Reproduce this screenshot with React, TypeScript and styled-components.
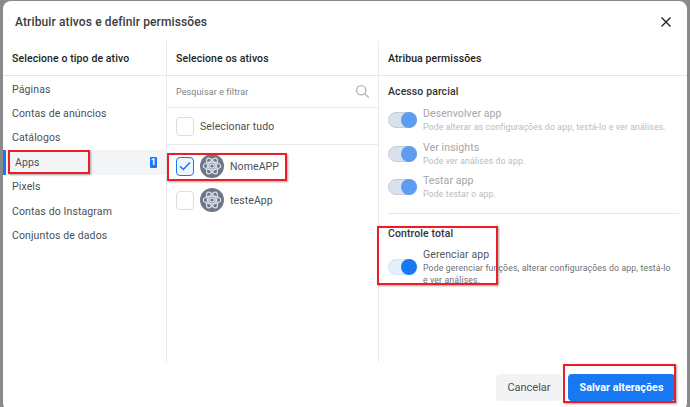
import React from 'react';
import styled, { createGlobalStyle } from 'styled-components';

const GlobalStyle = createGlobalStyle`
  html, body {
    margin: 0;
    padding: 0;
    background: #8a8a8a;
  }
  * {
    box-sizing: border-box;
  }
`;

const assetTypes = ['Páginas', 'Contas de anúncios', 'Catálogos', 'Apps', 'Pixels', 'Contas do Instagram', 'Conjuntos de dados'];

const partialPermissions = [
  { title: 'Desenvolver app', text: 'Pode alterar as configurações do app, testá-lo e ver análises.' },
  { title: 'Ver insights', text: 'Pode ver análises do app.' },
  { title: 'Testar app', text: 'Pode testar o app.' },
];

const AtomIcon = () => (
  <svg width="24" height="24" viewBox="0 0 24 24" fill="none" stroke="#dfe2ea" strokeWidth="1.2">
    <ellipse cx="12" cy="12" rx="8.8" ry="3.8" />
    <ellipse cx="12" cy="12" rx="8.8" ry="3.8" transform="rotate(60 12 12)" />
    <ellipse cx="12" cy="12" rx="8.8" ry="3.8" transform="rotate(120 12 12)" />
    <circle cx="12" cy="12" r="2.2" />
  </svg>
);

const App = () => (
  <Page>
    <GlobalStyle />
    <Modal>
      <Header>
        <Title>Atribuir ativos e definir permissões</Title>
        <CloseButton>
          <svg width="12" height="12" viewBox="0 0 12 12" stroke="#1c1e21" strokeWidth="1.3">
            <path d="M1.5 1.5 L10.5 10.5 M10.5 1.5 L1.5 10.5" />
          </svg>
        </CloseButton>
      </Header>
      <Columns>
        <TypeColumn>
          <ColumnHead>Selecione o tipo de ativo</ColumnHead>
          <TypeList>
            {assetTypes.map((name) => (
              <TypeRow key={name} $active={name === 'Apps'}>
                {name}
                {name === 'Apps' && <Badge>1</Badge>}
              </TypeRow>
            ))}
          </TypeList>
        </TypeColumn>
        <AssetColumn>
          <ColumnHead>Selecione os ativos</ColumnHead>
          <SearchRow>
            Pesquisar e filtrar
            <svg width="15" height="15" viewBox="0 0 15 15" fill="none" stroke="#b4b7bd" strokeWidth="1.4">
              <circle cx="6.2" cy="6.2" r="4.6" />
              <path d="M9.6 9.6 L13.8 13.8" />
            </svg>
          </SearchRow>
          <SelectAllRow>
            <Checkbox />
            <AssetName>Selecionar tudo</AssetName>
          </SelectAllRow>
          <AssetList>
            <AssetRow>
              <Checkbox $checked>
                <svg width="12" height="10" viewBox="0 0 12 10" fill="none" stroke="#1877f2" strokeWidth="1.5">
                  <path d="M1 5.2 L4.3 8.4 L11 1.4" />
                </svg>
              </Checkbox>
              <Avatar>
                <AtomIcon />
              </Avatar>
              <AssetName>NomeAPP</AssetName>
            </AssetRow>
            <AssetRow>
              <Checkbox />
              <Avatar>
                <AtomIcon />
              </Avatar>
              <AssetName>testeApp</AssetName>
            </AssetRow>
          </AssetList>
        </AssetColumn>
        <PermissionColumn>
          <ColumnHead>Atribua permissões</ColumnHead>
          <PermissionBody>
            <SectionTitle $top={9}>Acesso parcial</SectionTitle>
            <PermissionList>
              {partialPermissions.map((item) => (
                <PermissionRow key={item.title}>
                  <Toggle $dim />
                  <div>
                    <PermissionTitle $dim>{item.title}</PermissionTitle>
                    <PermissionText $dim>{item.text}</PermissionText>
                  </div>
                </PermissionRow>
              ))}
            </PermissionList>
            <Separator />
            <SectionTitle $top={13}>Controle total</SectionTitle>
            <FullRow>
              <Toggle />
              <FullText>
                <PermissionTitle>Gerenciar app</PermissionTitle>
                <PermissionText>Pode gerenciar funções, alterar configurações do app, testá-lo e ver análises.</PermissionText>
              </FullText>
            </FullRow>
          </PermissionBody>
        </PermissionColumn>
      </Columns>
      <Footer>
        <CancelButton>Cancelar</CancelButton>
        <SaveButton>Salvar alterações</SaveButton>
      </Footer>
    </Modal>
    <RedBox $x={8} $y={150} $w={82} $h={24} />
    <RedBox $x={167} $y={153} $w={120} $h={28} />
    <RedBox $x={377} $y={226} $w={121} $h={59} />
    <RedBox $x={563} $y={364} $w={113} $h={39} />
  </Page>
);

export default App;

const Page = styled.div`
  position: relative;
  width: 690px;
  height: 407px;
  padding: 1px 3px 0;
  overflow: hidden;
  font-family: Roboto, 'Liberation Sans', sans-serif;
`;

const Modal = styled.div`
  display: flex;
  flex-direction: column;
  height: 410px;
  background: #fff;
  border-radius: 8px;
`;

const Header = styled.div`
  display: flex;
  align-items: center;
  justify-content: space-between;
  height: 40px;
  padding: 2px 15px 0 12px;
`;

const Title = styled.div`
  font-size: 12px;
  font-weight: 500;
  letter-spacing: 0.12px;
  color: #3a3b3d;
`;

const CloseButton = styled.div`
  display: flex;
`;

const Columns = styled.div`
  display: flex;
  height: 321px;
`;

const TypeColumn = styled.div`
  width: 164px;
  border-right: 1px solid #e9eaec;
`;

const AssetColumn = styled.div`
  width: 212px;
  border-right: 1px solid #e9eaec;
`;

const PermissionColumn = styled.div`
  flex: 1;
`;

const ColumnHead = styled.div`
  display: flex;
  align-items: center;
  height: 35px;
  padding-left: 9px;
  font-size: 10.5px;
  font-weight: 500;
  letter-spacing: 0.1px;
  color: #1c1e21;
  border-bottom: 1px solid #e4e6e9;
`;

const TypeList = styled.div`
  padding-top: 1px;
`;

const TypeRow = styled.div<{ $active?: boolean }>`
  display: flex;
  align-items: center;
  justify-content: space-between;
  height: 24.4px;
  padding: 0 9px;
  font-size: 10.5px;
  letter-spacing: 0.12px;
  color: #4b4f56;
  background: ${(p) => (p.$active ? '#f3f4f6' : 'transparent')};
  border-left: ${(p) => (p.$active ? '3px solid #1877f2' : '0')};
`;

const Badge = styled.span`
  display: flex;
  align-items: center;
  justify-content: center;
  width: 7px;
  height: 11px;
  border-radius: 1px;
  background: #1877f2;
  color: #fff;
  font-size: 9px;
  font-weight: 700;
`;

const SearchRow = styled.div`
  display: flex;
  align-items: center;
  justify-content: space-between;
  height: 32px;
  padding: 0 8px 0 9px;
  font-size: 9px;
  letter-spacing: 0.1px;
  color: #7d8087;
  border-bottom: 1px solid #e9eaec;
`;

const SelectAllRow = styled.div`
  display: flex;
  align-items: center;
  gap: 6px;
  height: 37px;
  padding-left: 9px;
  border-bottom: 1px solid #e9eaec;
`;

const AssetList = styled.div`
  display: flex;
  flex-direction: column;
  gap: 10px;
  padding-top: 9px;
`;

const AssetRow = styled.div`
  display: flex;
  align-items: center;
  height: 24px;
  padding-left: 9px;
`;

const Checkbox = styled.div<{ $checked?: boolean }>`
  display: flex;
  align-items: center;
  justify-content: center;
  flex: none;
  width: 18px;
  height: 19px;
  border-radius: 4px;
  border: 1px solid ${(p) => (p.$checked ? '#1877f2' : '#dadde1')};
  background: ${(p) => (p.$checked ? '#f0f6ff' : '#fff')};
`;

const Avatar = styled.div`
  display: flex;
  align-items: center;
  justify-content: center;
  flex: none;
  width: 24px;
  height: 24px;
  margin: 0 6px;
  border-radius: 50%;
  background: #6f7687;
`;

const AssetName = styled.span`
  font-size: 10.5px;
  letter-spacing: 0.1px;
  color: #4b4f56;
`;

const PermissionBody = styled.div`
  padding: 0 8px 0 9px;
`;

const SectionTitle = styled.div<{ $top: number }>`
  margin-top: ${(p) => p.$top}px;
  font-size: 10.5px;
  font-weight: 500;
  line-height: 14px;
  letter-spacing: 0.1px;
  color: #303338;
`;

const PermissionList = styled.div`
  display: flex;
  flex-direction: column;
  gap: 6.5px;
  margin-top: 7.5px;
`;

const PermissionRow = styled.div`
  display: flex;
  align-items: center;
  gap: 6px;
  height: 27px;
`;

const FullRow = styled.div`
  display: flex;
  align-items: center;
  gap: 6px;
  margin-top: 7px;
`;

const FullText = styled.div`
  max-width: 250px;
`;

const Toggle = styled.div<{ $dim?: boolean }>`
  position: relative;
  flex: none;
  width: 29px;
  height: 16px;
  border-radius: 8px;
  background: ${(p) => (p.$dim ? '#d9e1ee' : '#e4eefc')};
  border: 1px solid ${(p) => (p.$dim ? '#c4ccd8' : '#d6e2f5')};

  &::after {
    content: '';
    position: absolute;
    right: -1px;
    top: -1px;
    width: 16px;
    height: 16px;
    border-radius: 50%;
    background: ${(p) => (p.$dim ? '#5d9cf0' : '#1877f2')};
  }
`;

const PermissionTitle = styled.div<{ $dim?: boolean }>`
  font-size: 10.5px;
  line-height: 14px;
  letter-spacing: 0.1px;
  color: ${(p) => (p.$dim ? '#a3a5a9' : '#56595e')};
`;

const PermissionText = styled.div<{ $dim?: boolean }>`
  font-size: 8.7px;
  line-height: 12px;
  letter-spacing: 0.14px;
  color: ${(p) => (p.$dim ? '#b9bbbe' : '#6d7076')};
`;

const Separator = styled.div`
  height: 1px;
  margin: 12.5px 0 0;
  background: #e4e6e9;
`;

const Footer = styled.div`
  display: flex;
  justify-content: flex-end;
  gap: 6px;
  padding: 12px 12px 0 0;
`;

const CancelButton = styled.div`
  display: flex;
  align-items: center;
  justify-content: center;
  width: 66px;
  height: 27px;
  border-radius: 4px;
  background: #f2f3f5;
  font-size: 11px;
  color: #4b4f56;
`;

const SaveButton = styled(CancelButton)`
  width: 107px;
  background: #1877f2;
  color: #fff;
  font-size: 10.8px;
  font-weight: 700;
`;

const RedBox = styled.div<{ $x: number; $y: number; $w: number; $h: number }>`
  position: absolute;
  left: ${(p) => p.$x}px;
  top: ${(p) => p.$y}px;
  width: ${(p) => p.$w}px;
  height: ${(p) => p.$h}px;
  border: 2px solid #ee1c25;
  box-shadow: 1px 1px 2px rgba(0, 0, 0, 0.35);
`;
